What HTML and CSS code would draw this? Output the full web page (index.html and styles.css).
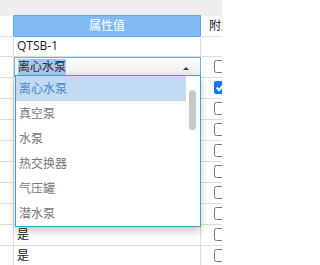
FILE: index.html
```html
<!DOCTYPE html>
<html lang="zh-CN">
<head>
<meta charset="utf-8">
<link rel="stylesheet" href="styles.css">
</head>
<body>
<div class="page">
<div class="topbar"></div>
<div class="grid">
  <div class="cell c1 head head-edge"></div>
  <div class="cell c2 head head-main">属性值</div>
  <div class="cell c3 head">附加</div>

  <div class="cell c1"></div>
  <div class="cell c2 text">QTSB-1</div>
  <div class="cell c3"></div>

  <div class="cell c1"></div>
  <div class="cell c2 select-cell">
    <div class="select">
      <span class="sel-text">离心水泵</span>
      <span class="arrow"></span>
      <div class="dropdown">
        <ul class="options">
          <li class="opt active">离心水泵</li>
          <li class="opt">真空泵</li>
          <li class="opt">水泵</li>
          <li class="opt">热交换器</li>
          <li class="opt">气压罐</li>
          <li class="opt">潜水泵</li>
        </ul>
        <div class="track"><div class="thumb"></div></div>
      </div>
    </div>
  </div>
  <div class="cell c3"><input type="checkbox" class="chk"></div>

  <div class="cell c1"></div>
  <div class="cell c2"></div>
  <div class="cell c3"><input type="checkbox" class="chk" checked></div>

  <div class="cell c1"></div>
  <div class="cell c2"></div>
  <div class="cell c3"><input type="checkbox" class="chk"></div>

  <div class="cell c1"></div>
  <div class="cell c2"></div>
  <div class="cell c3"><input type="checkbox" class="chk"></div>

  <div class="cell c1"></div>
  <div class="cell c2"></div>
  <div class="cell c3"><input type="checkbox" class="chk"></div>

  <div class="cell c1"></div>
  <div class="cell c2"></div>
  <div class="cell c3"><input type="checkbox" class="chk"></div>

  <div class="cell c1"></div>
  <div class="cell c2"></div>
  <div class="cell c3"><input type="checkbox" class="chk"></div>

  <div class="cell c1"></div>
  <div class="cell c2"></div>
  <div class="cell c3"><input type="checkbox" class="chk"></div>

  <div class="cell c1"></div>
  <div class="cell c2 text">是</div>
  <div class="cell c3"><input type="checkbox" class="chk"></div>

  <div class="cell c1"></div>
  <div class="cell c2 text">是</div>
  <div class="cell c3"><input type="checkbox" class="chk"></div>
</div>
</div>
</body>
</html>
```
FILE: styles.css
```css
html, body {
  margin: 0;
  padding: 0;
  background: #ffffff;
  overflow: hidden;
}
body {
  font-family: "Open Sans", "Noto Sans CJK SC", sans-serif;
  font-size: 12px;
  color: #222222;
}
.page {
  width: 222px;
  height: 265px;
  overflow: hidden;
}
.topbar {
  height: 15px;
  background: #eeeeee;
}
.grid {
  display: grid;
  grid-template-columns: 14px 187px 21px;
  grid-auto-rows: 21px;
  width: 222px;
}
.cell {
  box-sizing: border-box;
  border-right: 1px solid #dddddd;
  border-bottom: 1px solid #dddddd;
  height: 21px;
  white-space: nowrap;
  overflow: hidden;
}
.c3 {
  border-right: none;
}
.head {
  height: 22px;
  border-top: 1px solid #eeeeee;
  line-height: 20px;
}
.head-edge {
  border-right-color: #5fa6ec;
}
.head-main {
  background: #80bbf6;
  color: #ffffff;
  text-align: center;
  border-top-color: #5fa6ec;
  border-right-color: #5fa6ec;
  border-bottom-color: #5fa6ec;
}
.c3.head {
  padding-left: 8px;
  color: #222222;
}
.text {
  padding-left: 3px;
  line-height: 20px;
}
.select-cell {
  overflow: visible;
}
.select {
  position: relative;
  box-sizing: border-box;
  width: 187px;
  height: 20px;
  border: 1px solid #6eaeea;
  background: linear-gradient(#ffffff, #ececec);
  display: flex;
  align-items: center;
  justify-content: space-between;
  padding: 0 11px 0 3px;
}
.sel-text {
  background: #a8c8ec;
  color: #2a2a2a;
  line-height: 16px;
}
.arrow {
  width: 0;
  height: 0;
  border-left: 3px solid transparent;
  border-right: 3px solid transparent;
  border-bottom: 3px solid #444444;
  margin-top: 2px;
}
.dropdown {
  position: absolute;
  left: 0;
  top: 17px;
  z-index: 10;
  box-sizing: border-box;
  width: 186px;
  height: 152px;
  border: 1px solid #3aa3da;
  background: #ffffff;
  box-shadow: 0 4px 8px rgba(0, 0, 0, 0.22);
  display: flex;
}
.options {
  list-style: none;
  margin: 0;
  padding: 0;
  flex: 1;
}
.opt {
  height: 25px;
  line-height: 25px;
  padding-left: 3px;
  color: #777777;
}
.opt.active {
  background: #c3dbf2;
  color: #4a86c8;
}
.track {
  width: 14px;
}
.thumb {
  width: 7px;
  height: 40px;
  margin: 14px 0 0 3px;
  border-radius: 4px;
  background: #c8c8c8;
}
.chk {
  margin: 3px 0 0 13px;
  width: 13px;
  height: 13px;
  display: block;
}
```
